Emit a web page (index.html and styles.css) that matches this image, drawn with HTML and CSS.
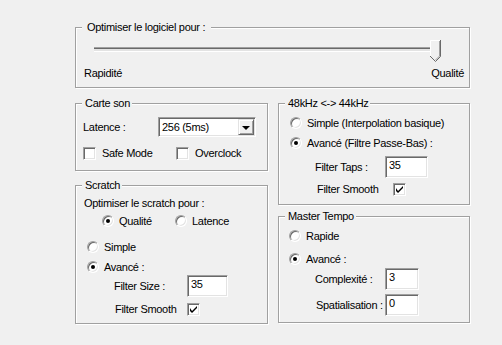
FILE: index.html
```html
<!DOCTYPE html>
<html lang="fr">
<head>
<meta charset="utf-8">
<title>Options</title>
<link rel="stylesheet" href="styles.css">
</head>
<body>
<div class="dialog">
  <div class="group g-opt">
    <div class="gtitle gtitle-opt">Optimiser le logiciel pour :</div>
    <div class="slider">
      <div class="track"></div>
      <svg class="thumb" width="11" height="22" viewBox="0 0 11 22">
        <path d="M0.5 21V0.5H10.5V16L5.5 21" fill="#f0f0f0" stroke="none"/>
        <path d="M0.5 17V0.5H10" fill="none" stroke="#ffffff"/>
        <path d="M10.5 0V16.5L5.5 21.5L0 16" fill="none" stroke="#696969"/>
        <path d="M9.5 1V16L5.5 20" fill="none" stroke="#a0a0a0"/>
      </svg>
    </div>
    <div class="slider-labels"><span>Rapidité</span><span>Qualité</span></div>
  </div>

  <div class="columns">
    <div class="col col-left">
      <div class="group g-carte">
        <div class="gtitle">Carte son</div>
        <div class="row r-combo">
          <span class="lbl w-latence">Latence :</span>
          <div class="combo">
            <span class="combo-text">256 (5ms)</span>
            <span class="combo-btn"><span class="arrow"></span></span>
          </div>
        </div>
        <div class="row r-checks">
          <label class="check-item w-safe"><span class="checkbox"></span><span>Safe Mode</span></label>
          <label class="check-item"><span class="checkbox"></span><span>Overclock</span></label>
        </div>
      </div>

      <div class="group g-scratch">
        <div class="gtitle">Scratch</div>
        <div class="row s-r1">Optimiser le scratch pour :</div>
        <div class="row s-r2">
          <span class="radio-item w-qualite"><span class="radio on"></span><span>Qualité</span></span>
          <span class="radio-item"><span class="radio"></span><span>Latence</span></span>
        </div>
        <div class="row s-r3"><span class="radio-item"><span class="radio"></span><span>Simple</span></span></div>
        <div class="row s-r4"><span class="radio-item"><span class="radio on"></span><span>Avancé :</span></span></div>
        <div class="row field s-r5"><span class="lbl w-fsize">Filter Size :</span><span class="input w-in41">35</span></div>
        <div class="row s-r6"><span class="lbl w-fsmooth">Filter Smooth</span><span class="checkbox checked"><svg width="9" height="9" viewBox="0 0 9 9"><path d="M1 3V6L3 8L8 3V1L3 6Z" fill="#000"/></svg></span></div>
      </div>
    </div>

    <div class="col col-right">
      <div class="group g-48">
        <div class="gtitle">48kHz &lt;-&gt; 44kHz</div>
        <div class="row k-r1"><span class="radio-item"><span class="radio"></span><span>Simple (Interpolation basique)</span></span></div>
        <div class="row k-r2"><span class="radio-item"><span class="radio on"></span><span>Avancé (Filtre Passe-Bas) :</span></span></div>
        <div class="row field k-r3"><span class="lbl w-taps">Filter Taps :</span><span class="input w-in43">35</span></div>
        <div class="row k-r4"><span class="lbl w-ksmooth">Filter Smooth</span><span class="checkbox checked"><svg width="9" height="9" viewBox="0 0 9 9"><path d="M1 3V6L3 8L8 3V1L3 6Z" fill="#000"/></svg></span></div>
      </div>

      <div class="group g-mt">
        <div class="gtitle">Master Tempo</div>
        <div class="row m-r1"><span class="radio-item"><span class="radio"></span><span>Rapide</span></span></div>
        <div class="row m-r2"><span class="radio-item"><span class="radio on"></span><span>Avancé :</span></span></div>
        <div class="row field m-r3"><span class="lbl w-comp">Complexité :</span><span class="input w-in34">3</span></div>
        <div class="row field m-r4"><span class="lbl w-spat">Spatialisation :</span><span class="input w-in34">0</span></div>
      </div>
    </div>
  </div>
</div>
</body>
</html>
```

FILE: styles.css
```css
html, body {
  margin: 0;
  padding: 0;
  background: #f0f0f0;
}

body {
  font-family: "Liberation Sans", Arial, sans-serif;
  font-size: 11px;
  line-height: 13px;
  letter-spacing: -0.3px;
  color: #000;
  width: 502px;
  height: 345px;
  overflow: hidden;
}

.dialog {
  padding: 27px 0 0 75px;
  width: 395px;
}

.group {
  position: relative;
  box-sizing: border-box;
  border: 1px solid #a0a0a0;
  box-shadow: inset 1px 1px #ffffff, 1px 1px #ffffff;
}

.gtitle {
  position: absolute;
  top: -7px;
  left: 6px;
  padding: 0 2px 0 3px;
  background: #f0f0f0;
  line-height: 13px;
  white-space: nowrap;
}

.gtitle-opt {
  padding: 0 6px 0 5px;
}

/* top group */
.g-opt {
  height: 61px;
  padding: 12px 5px 0 8px;
}

.slider {
  position: relative;
  height: 22px;
  margin-left: 10px;
  width: 347px;
}

.track {
  position: absolute;
  left: 0;
  top: 7px;
  width: 339px;
  height: 1px;
  background: #a0a0a0;
  border-bottom: 1px solid #696969;
  box-shadow: 0 2px 0 #e3e3e3, 0 3px 0 #ffffff;
}

.thumb {
  position: absolute;
  right: 0;
  top: 0;
  display: block;
}

.slider-labels {
  margin-top: 3px;
  height: 16px;
  display: flex;
  align-items: center;
  justify-content: space-between;
}

/* columns */
.columns {
  display: grid;
  grid-template-columns: 193px 192px;
  column-gap: 10px;
  margin-top: 15px;
}

.col {
  display: flex;
  flex-direction: column;
}

.col-left { gap: 14px; }
.col-right { gap: 11px; }

.row {
  display: flex;
  align-items: center;
  height: 16px;
  white-space: nowrap;
}

.row.field { height: 22px; }

.lbl {
  display: inline-block;
  flex: none;
}

/* Carte son */
.g-carte {
  height: 68px;
  padding: 13px 0 0 7px;
}

.r-combo { height: 20px; }
.w-latence { width: 75px; }

.combo {
  box-sizing: border-box;
  width: 98px;
  height: 20px;
  background: #fff;
  border: 1px solid;
  border-color: #a0a0a0 #ffffff #ffffff #a0a0a0;
  box-shadow: inset 1px 1px #696969, inset -1px -1px #e3e3e3;
  display: flex;
  align-items: center;
  justify-content: space-between;
  padding: 1px 1px 1px 3px;
}

.combo-btn {
  box-sizing: border-box;
  width: 16px;
  height: 16px;
  background: #f0f0f0;
  border: 1px solid;
  border-color: #e3e3e3 #696969 #696969 #e3e3e3;
  box-shadow: inset 1px 1px #fff, inset -1px -1px #a0a0a0;
  display: flex;
  align-items: center;
  justify-content: center;
}

.arrow {
  width: 0;
  height: 0;
  border-left: 4px solid transparent;
  border-right: 4px solid transparent;
  border-top: 4px solid #000;
  margin-top: 1px;
}

.r-checks {
  margin-top: 10px;
  height: 13px;
}

.check-item {
  display: flex;
  align-items: center;
  gap: 6px;
}

.w-safe { width: 93px; }

.checkbox {
  box-sizing: border-box;
  width: 13px;
  height: 13px;
  background: #fff;
  border: 1px solid;
  border-color: #a0a0a0 #ffffff #ffffff #a0a0a0;
  box-shadow: inset 1px 1px #696969, inset -1px -1px #e3e3e3;
  display: flex;
  align-items: center;
  justify-content: center;
  flex: none;
}

.checkbox svg { display: block; }

/* radios */
.radio-item {
  display: flex;
  align-items: center;
  gap: 5px;
}

.radio {
  box-sizing: border-box;
  width: 12px;
  height: 12px;
  border-radius: 50%;
  background: #fff;
  border: 1px solid;
  border-color: #a0a0a0 #ffffff #ffffff #a0a0a0;
  box-shadow: inset 1px 1px #696969, inset -1px -1px #e3e3e3;
  display: flex;
  align-items: center;
  justify-content: center;
  flex: none;
}

.radio.on::after {
  content: "";
  width: 4px;
  height: 4px;
  border-radius: 50%;
  background: #000;
}

.w-qualite { width: 73px; }

/* inputs */
.input {
  box-sizing: border-box;
  height: 22px;
  background: #fff;
  border: 1px solid;
  border-color: #a0a0a0 #ffffff #ffffff #a0a0a0;
  box-shadow: inset 1px 1px #696969, inset -1px -1px #e3e3e3;
  padding: 2px 3px;
  line-height: 13px;
  flex: none;
}

.w-in41 { width: 41px; }
.w-in43 { width: 43px; }
.w-in34 { width: 34px; }

/* Scratch */
.g-scratch {
  height: 139px;
  padding: 9px 0 0 8px;
}

.s-r2 { margin-top: 2px; margin-left: 18px; }
.s-r3 { margin-top: 10px; margin-left: 3px; }
.s-r4 { margin-top: 4px; margin-left: 3px; }
.s-r5 { margin-top: 0; margin-left: 30px; }
.s-r6 { margin-top: 4px; margin-left: 31px; }
.w-fsize { width: 73px; }
.w-fsmooth { width: 72px; }

/* 48kHz */
.g-48 {
  height: 102px;
  padding: 11px 0 0 0;
}

.k-r1 { margin-left: 11px; }
.k-r2 { margin-top: 4px; margin-left: 11px; }
.k-r3 { margin-top: 5px; margin-left: 36px; }
.k-r4 { margin-top: 3px; margin-left: 38px; }
.w-taps { width: 70px; }
.w-ksmooth { width: 76px; }

/* Master Tempo */
.g-mt {
  height: 107px;
  padding: 11px 0 0 0;
}

.m-r1 { margin-left: 10px; }
.m-r2 { margin-top: 7px; margin-left: 10px; }
.m-r3 { margin-top: 1px; margin-left: 36px; }
.m-r4 { margin-top: 4px; margin-left: 37px; }
.w-comp { width: 70px; }
.w-spat { width: 69px; }
```
